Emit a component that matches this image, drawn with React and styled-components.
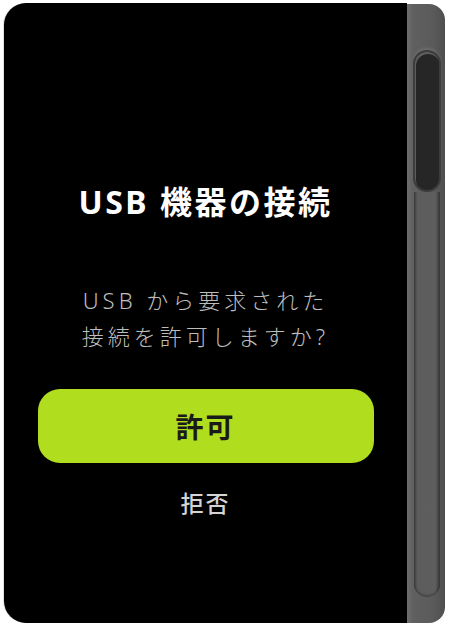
import React from 'react';
import styled, { createGlobalStyle } from 'styled-components';

const GlobalStyle = createGlobalStyle`
	html, body {
		margin: 0;
		padding: 0;
		background: #ffffff;
	}
	body {
		font-family: "Noto Sans", "Noto Sans CJK JP", sans-serif;
	}
`;

const Page = styled.div`
	width: 450px;
	height: 630px;
	padding: 3px 0 0 4px;
	box-sizing: border-box;
`;

const Device = styled.div`
	display: flex;
	height: 620px;
`;

const Screen = styled.div`
	width: 403px;
	background: #000000;
	border-radius: 22px 0 0 22px;
	box-shadow: -1px 0 0 rgba(0, 0, 0, 0.12);
	display: flex;
	flex-direction: column;
	align-items: center;
	padding-top: 179px;
	box-sizing: border-box;
`;

const Title = styled.h1`
	margin: 0;
	font-family: "Noto Sans", "Noto Sans CJK JP", sans-serif;
	font-weight: 700;
	font-size: 32px;
	line-height: 40px;
	letter-spacing: 2.5px;
	color: #ffffff;
	text-align: center;
`;

const Message = styled.p`
	margin: 60px 0 0;
	font-family: "Noto Sans", "Noto Sans CJK JP", sans-serif;
	font-weight: 300;
	font-size: 22px;
	line-height: 36px;
	letter-spacing: 4px;
	color: #bdbdbd;
	text-align: center;
`;

const PrimaryButton = styled.button`
	margin-top: 35px;
	width: 336px;
	height: 74px;
	border: none;
	border-radius: 22px;
	background: #b1dd1f;
	color: #1a1a1a;
	font-family: "Noto Sans CJK JP", sans-serif;
	font-weight: 700;
	font-size: 28px;
	letter-spacing: 2px;
	cursor: pointer;
`;

const TextButton = styled.button`
	margin-top: 24px;
	border: none;
	background: transparent;
	color: #d4d4d4;
	font-family: "Noto Sans CJK JP", sans-serif;
	font-weight: 500;
	font-size: 23px;
	line-height: 30px;
	letter-spacing: 2px;
	padding: 0;
	cursor: pointer;
`;

const Side = styled.div`
	width: 38px;
	margin-top: 1px;
	border-radius: 0 16px 16px 0;
	background: linear-gradient(90deg, #6e6e6e 0%, #606060 15%, #5a5a5a 70%, #4e4e4e 100%);
	display: flex;
	flex-direction: column;
	align-items: center;
	padding: 48px 0 26px;
	box-sizing: border-box;
`;

const SideButton = styled.div`
	width: 24px;
	height: 138px;
	border-radius: 12px;
	background: #262626;
	box-shadow:
		0 0 0 2px #3c3c3c,
		inset 1px 2px 0 rgba(200, 200, 200, 0.35),
		0 -3px 4px rgba(150, 150, 150, 0.5);
	margin-left: 2px;
`;

const Groove = styled.div`
	flex: 1;
	width: 26px;
	margin-top: 2px;
	border-radius: 0 0 13px 13px;
	background: linear-gradient(90deg, #3e3e3e 0%, #5c5c5c 14%, #5e5e5e 82%, #383838 100%);
	box-shadow: inset 0 -2px 2px rgba(0, 0, 0, 0.25);
	margin-left: 2px;
`;

const App = () => {
	return (
		<>
			<GlobalStyle />
			<Page>
				<Device>
					<Screen>
						<Title>USB 機器の接続</Title>
						<Message>
							USB から要求された
							<br />
							接続を許可しますか?
						</Message>
						<PrimaryButton>許可</PrimaryButton>
						<TextButton>拒否</TextButton>
					</Screen>
					<Side>
						<SideButton />
						<Groove />
					</Side>
				</Device>
			</Page>
		</>
	);
};

export default App;
